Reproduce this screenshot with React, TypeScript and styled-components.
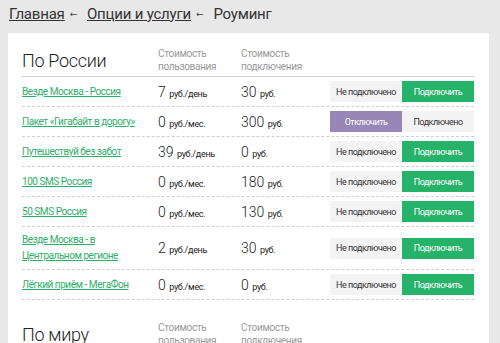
import React from 'react'
import styled, { createGlobalStyle } from 'styled-components'

const GlobalStyle = createGlobalStyle`
  body {
    margin: 0;
    background: #e8e8e8;
    font-family: Roboto, "Liberation Sans", sans-serif;
    color: #333;
  }
`

type Option = {
  name: string
  use: string
  useUnit: string
  connect: string
  active?: boolean
}

const russia: Option[] = [
  { name: 'Везде Москва - Россия', use: '7', useUnit: 'руб./день', connect: '30' },
  { name: 'Пакет «Гигабайт в дорогу»', use: '0', useUnit: 'руб./мес.', connect: '300', active: true },
  { name: 'Путешествуй без забот', use: '39', useUnit: 'руб./день', connect: '0' },
  { name: '100 SMS Россия', use: '0', useUnit: 'руб./мес.', connect: '180' },
  { name: '50 SMS Россия', use: '0', useUnit: 'руб./мес.', connect: '130' },
  { name: 'Везде Москва - в Центральном регионе', use: '2', useUnit: 'руб./день', connect: '30' },
  { name: 'Лёгкий приём - МегаФон', use: '0', useUnit: 'руб./мес.', connect: '0' },
]

const Section = ({ title, items }: { title: string; items: Option[] }) => (
  <Block>
    <Head>
      <Title>{title}</Title>
      <ColLabel>Стоимость<br />пользования</ColLabel>
      <ColLabel>Стоимость<br />подключения</ColLabel>
    </Head>
    {items.map((o) => (
      <Row key={o.name}>
        <NameLink href="#">{o.name}</NameLink>
        <Price>{o.use} <Unit>{o.useUnit}</Unit></Price>
        <Price>{o.connect} <Unit>руб.</Unit></Price>
        <Buttons>
          {o.active ? (
            <>
              <Btn kind="purple">Отключить</Btn>
              <Btn kind="gray">Подключено</Btn>
            </>
          ) : (
            <>
              <Btn kind="gray">Не подключено</Btn>
              <Btn kind="green">Подключить</Btn>
            </>
          )}
        </Buttons>
      </Row>
    ))}
  </Block>
)

const App = () => {
  return (
    <Page>
      <GlobalStyle />
      <Crumbs>
        <Crumb href="#">Главная</Crumb>
        <Arrow>←</Arrow>
        <Crumb href="#">Опции и услуги</Crumb>
        <Arrow>←</Arrow>
        <Current>Роуминг</Current>
      </Crumbs>
      <Card>
        <Section title="По России" items={russia} />
        <Section title="По миру" items={[]} />
      </Card>
    </Page>
  )
}

export default App

const Page = styled.div`
  width: 500px;
  height: 343px;
  overflow: hidden;
`

const Crumbs = styled.div`
  display: flex;
  align-items: center;
  height: 27px;
  padding: 0 0 0 9px;
  margin-bottom: 6px;
  font-size: 15px;
  letter-spacing: -0.2px;
`

const Crumb = styled.a`
  color: #333;
  text-decoration: underline;
`

const Arrow = styled.span`
  font-family: "DejaVu Sans", sans-serif;
  font-size: 9px;
  color: #444;
  margin: 1px 10px 0 5px;
`

const Current = styled.span`
  color: #333;
`

const Card = styled.div`
  margin-left: 8px;
  width: 481px;
  background: #fff;
  padding: 14px 15px 20px 14px;
  box-sizing: border-box;
  min-height: 320px;
`

const Block = styled.div`
  margin-bottom: 21px;
`

const Grid = styled.div`
  display: grid;
  grid-template-columns: 136px 83px 89px 1fr;
  align-items: center;
`

const Head = styled(Grid)`
  align-items: end;
  padding-bottom: 3px;
  border-bottom: 1px solid #cfcfcf;
`

const Title = styled.div`
  font-size: 18px;
  font-weight: 300;
  color: #222;
  letter-spacing: -0.3px;
  padding-bottom: 2px;
`

const ColLabel = styled.div`
  font-size: 10px;
  line-height: 13px;
  letter-spacing: -0.3px;
  color: #999;
`

const Row = styled(Grid)`
  min-height: 29px;
  border-bottom: 1px dashed #cfcfcf;
`

const NameLink = styled.a`
  font-size: 10px;
  line-height: 16px;
  letter-spacing: -0.45px;
  color: #2fae69;
  text-decoration: underline;
  padding: 5px 12px 5px 0;
`

const Price = styled.div`
  font-size: 14px;
  font-weight: 300;
  color: #222;
`

const Unit = styled.span`
  font-size: 9px;
  font-weight: 400;
  letter-spacing: -0.3px;
`

const Buttons = styled.div`
  display: flex;
  height: 21px;
`

const Btn = styled.button<{ kind: 'gray' | 'green' | 'purple' }>`
  width: 72px;
  height: 21px;
  border: none;
  padding: 0;
  font-family: inherit;
  font-size: 9px;
  letter-spacing: -0.5px;
  cursor: pointer;
  background: ${(p) => (p.kind === 'green' ? '#27b26a' : p.kind === 'purple' ? '#9886b6' : '#f3f3f3')};
  color: ${(p) => (p.kind === 'gray' ? '#333' : '#fff')};
`
